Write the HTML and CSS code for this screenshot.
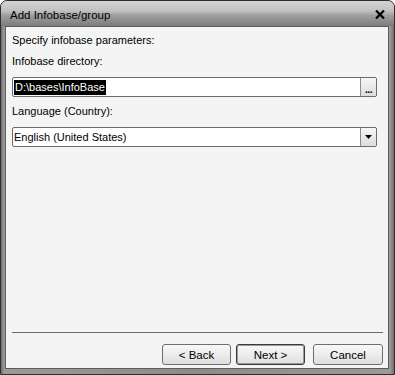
FILE: index.html
```html
<!DOCTYPE html>
<html lang="en">
<head>
    <meta charset="UTF-8">
    <meta name="viewport" content="width=device-width, initial-scale=1.0">
    <title>Add Infobase/group</title>
    <link rel="stylesheet" href="styles.css">
</head>
<body>

<div class="window">
    <div class="titlebar">
        <span class="title">Add Infobase/group</span>
        <svg class="close" width="10" height="9" viewBox="0 0 10 9">
            <path d="M1 0.5 L9 8.5 M9 0.5 L1 8.5" stroke="#000" stroke-width="2.2" fill="none"/>
        </svg>
    </div>

    <div class="frame">
        <div class="client">
            <div class="form">
                <div class="caption">Specify infobase parameters:</div>

                <div class="label">Infobase directory:</div>
                <div class="field">
                    <span class="value"><span class="selected">D:\bases\InfoBase</span></span>
                    <span class="field-btn dots">...</span>
                </div>

                <div class="label">Language (Country):</div>
                <div class="field">
                    <span class="value">English (United States)</span>
                    <span class="field-btn">
                        <svg width="7" height="4" viewBox="0 0 7 4"><path d="M0 0 H7 L3.5 4 Z" fill="#000"/></svg>
                    </span>
                </div>
            </div>

            <div class="footer">
                <div class="separator"></div>
                <div class="buttons">
                    <button class="btn back">&lt; Back</button>
                    <button class="btn default">Next &gt;</button>
                    <button class="btn cancel">Cancel</button>
                </div>
            </div>
        </div>
    </div>
</div>

</body>
</html>
```

FILE: styles.css
```css
        body {
            margin: 0;
            background: #ffffff;
            font-family: "Liberation Sans", Arial, sans-serif;
            font-size: 11px;
            color: #000;
        }

        .window {
            width: 395px;
            height: 375px;
            box-sizing: border-box;
            border: 1px solid #2e2e2e;
            border-radius: 7px 7px 0 0;
            overflow: hidden;
            display: flex;
            flex-direction: column;
            background: #8a8a8a;
        }

        .titlebar {
            height: 25px;
            flex: none;
            display: flex;
            align-items: center;
            justify-content: space-between;
            padding: 0 9px 0 9px;
            background: linear-gradient(#d4d4d4 0%, #c0c0c0 40%, #9e9e9e 58%, #7c7c7c 100%);
        }

        .title {
            font-size: 11.5px;
            color: #000;
            padding-top: 2px;
        }

        .close {
            display: block;
            margin-top: 1px;
        }

        .frame {
            flex: 1;
            display: flex;
            padding: 0 5px 5px 4px;
            background: linear-gradient(90deg, #6e6e6e 0px, #9a9a9a 3px, #8c8c8c 50%, #9a9a9a 99%, #6e6e6e 100%);
        }

		.client {
			flex: 1;
			display: flex;
			flex-direction: column;
			background: #f4f4f4;
			border: 1px solid #5c5c5c;
		}

        .form {
            flex: 1;
            padding: 7px 11px 0 6px;
        }

        .caption,
        .label {
            line-height: 13px;
        }

        .label {
            margin-top: 8px;
            margin-bottom: 9px;
        }

        .field {
            height: 20px;
            box-sizing: border-box;
            display: flex;
            border: 1px solid #6c6c6c;
            border-radius: 2px;
            background: #ffffff;
        }

        .value {
            flex: 1;
            display: flex;
            align-items: center;
            padding-left: 1px;
            white-space: nowrap;
        }

        .selected {
            background: #000;
            color: #fff;
            padding: 1px;
            line-height: 13px;
        }

        .field-btn {
            width: 15px;
            flex: none;
            display: flex;
            align-items: center;
            justify-content: center;
            border-left: 1px solid #8a8a8a;
            border-radius: 0 2px 2px 0;
            background: linear-gradient(#f6f6f6, #dcdcdc);
        }

        .dots {
            align-items: flex-end;
            font-weight: bold;
            font-size: 10px;
            line-height: 12px;
            letter-spacing: -0.5px;
        }

        .footer {
            padding: 0 5px 3px 6px;
        }

        .separator {
            height: 1px;
            background: #6a6a6a;
            margin-bottom: 11px;
        }

        .buttons {
            display: flex;
            justify-content: flex-end;
            gap: 5px;
        }

        .btn {
            width: 70px;
            height: 21px;
            box-sizing: border-box;
            padding: 0;
            font-family: "Liberation Sans", Arial, sans-serif;
            font-size: 11.5px;
            color: #000;
            border: 1px solid #6e6e6e;
            border-radius: 3px;
            background: linear-gradient(#f8f8f8 0%, #ececec 50%, #dedede 100%);
        }

        .back {
            width: 69px;
        }

        .default {
            width: 69px;
            border-color: #3a3a3a;
            box-shadow: inset 0 0 0 1px #9a9a9a;
        }

        .cancel {
            margin-left: 3px;
        }
```
